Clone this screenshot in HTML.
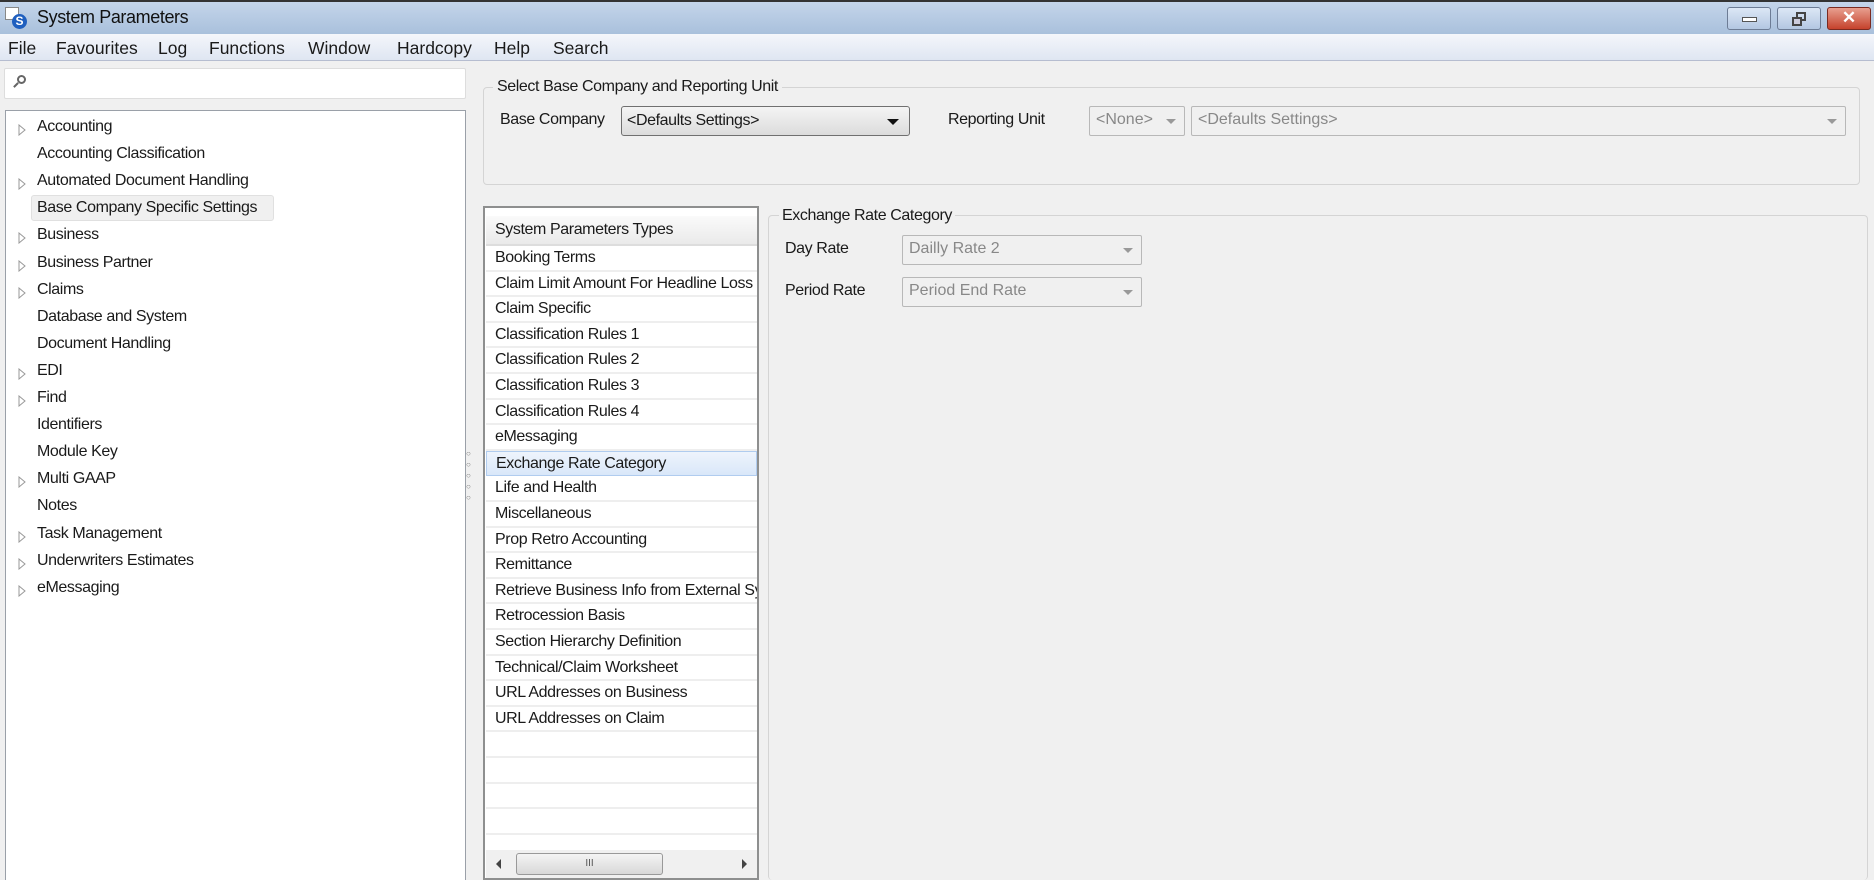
<!DOCTYPE html>
<html style="overflow:hidden;height:880px"><head><meta charset="utf-8"><style>
*{box-sizing:border-box;margin:0;padding:0}
body{width:1874px;height:880px;overflow:hidden;background:#f0f0f0;font-family:"Liberation Sans",sans-serif;font-size:16px;color:#1a1a1a;position:relative}
.a{position:absolute}
.t{letter-spacing:-0.4px;white-space:nowrap}
#title{left:0;top:0;width:1874px;height:34px;background:linear-gradient(#c4d5ea,#a9c0dc);border-top:2px solid #333}
#menu{left:0;top:34px;width:1874px;height:27px;background:linear-gradient(#f4f6fb,#dfe6f2);border-bottom:1px solid #b6bdd0;font-size:17.5px}
.mb{top:4px}
.wb{top:5px;height:23px;border:1px solid #6d7c95;border-radius:3px;background:linear-gradient(#dce7f5,#b3c7e2)}
.tree{left:5px;top:110px;width:461px;height:770px;background:#fff;border:1px solid #9aa0a8;border-bottom:none}
.grp{border:1px solid #d4d4d4;border-radius:4px}
.cb{border:1px solid #b8b8b8;border-radius:2px;background:#f0f0f0;color:#888;padding:4px 6px;font-size:16px}
.dd{position:absolute;right:8px;top:12px;border-left:5px solid transparent;border-right:5px solid transparent;border-top:5px solid #999}
.row{left:1px;width:271px;height:25.5px;border-bottom:2px solid #eeeeee;padding:3px 0 0 9px;overflow:hidden;white-space:nowrap;letter-spacing:-0.4px}
</style></head><body>
<div id="title" class="a">
 <div class="a" style="left:5px;top:5px;width:14px;height:13px;border:1px solid #888;background:#fff"></div>
 <div class="a" style="left:12px;top:12px;width:15px;height:15px;border-radius:50%;background:#1f5fbf;color:#fff;font-size:12px;font-weight:bold;text-align:center;line-height:15px">S</div>
 <div class="a t" style="left:37px;top:5px;font-size:18px;color:#111">System Parameters</div>
 <div class="a wb" style="left:1727px;width:44px"><div class="a" style="left:14px;top:9px;width:15px;height:5px;background:#fff;border:1px solid #555"></div></div>
 <div class="a wb" style="left:1777px;width:44px"><div class="a" style="left:18px;top:4px;width:10px;height:9px;border:2px solid #444"></div><div class="a" style="left:14px;top:9px;width:10px;height:9px;border:2px solid #444;background:#ccd"></div></div>
 <div class="a wb" style="left:1827px;width:44px;background:linear-gradient(#e8a090,#c5422c);border-color:#7a2a20;color:#fff;font-weight:bold;font-size:17px;text-align:center;line-height:20px">✕</div>
</div>
<div id="menu" class="a">
 <span class="a mb" style="left:8px">File</span>
 <span class="a mb" style="left:56px">Favourites</span>
 <span class="a mb" style="left:158px">Log</span>
 <span class="a mb" style="left:209px">Functions</span>
 <span class="a mb" style="left:308px">Window</span>
 <span class="a mb" style="left:397px">Hardcopy</span>
 <span class="a mb" style="left:494px">Help</span>
 <span class="a mb" style="left:553px">Search</span>
</div>
<div class="a" style="left:4px;top:68px;width:462px;height:31px;background:#fff;border:1px solid #ddd;border-radius:2px">
 <div class="a" style="left:12px;top:6px;width:9px;height:9px;border:2px solid #666;border-radius:50%"></div>
 <div class="a" style="left:8px;top:15px;width:6px;height:2px;background:#666;transform:rotate(-45deg)"></div>
</div>
<div class="a tree"></div>
<div class="a" style="left:31px;top:195px;width:243px;height:26px;background:#f0f0f0;border:1px solid #e0e0e0;border-radius:3px"></div>
<div id="items"></div>
<div class="a" style="left:466px;top:448px;width:8px;font-size:8px;line-height:11px;color:#777">○<br>○<br>○<br>○<br>○</div>

<div class="a grp" style="left:483px;top:87px;width:1377px;height:98px"></div>
<div class="a t" style="left:493px;top:78px;background:#f0f0f0;padding:0 4px">Select Base Company and Reporting Unit</div>
<div class="a t" style="left:500px;top:111px">Base Company</div>
<div class="a" style="left:621px;top:106px;width:289px;height:30px;border:1px solid #707070;border-radius:3px;background:linear-gradient(#f4f4f4,#dcdcdc);padding:5px 5px;letter-spacing:-0.4px">&lt;Defaults Settings&gt;<div class="a" style="right:10px;top:12px;border-left:6px solid transparent;border-right:6px solid transparent;border-top:6px solid #111"></div></div>
<div class="a t" style="left:948px;top:111px">Reporting Unit</div>
<div class="a cb" style="left:1089px;top:106px;width:96px;height:30px">&lt;None&gt;<div class="dd"></div></div>
<div class="a cb" style="left:1191px;top:106px;width:655px;height:30px">&lt;Defaults Settings&gt;<div class="dd"></div></div>

<div class="a" style="left:483px;top:206px;width:276px;height:674px;background:#fff;border:2px solid #8e8f8f">
 <div class="a" style="left:1px;top:8px;width:271px;height:30px;background:linear-gradient(#fafafa,#eaeaea);border-bottom:2px solid #ddd;padding:5px 0 0 9px;letter-spacing:-0.4px">System Parameters Types</div>
 <div id="rows"></div>
 <div class="a" style="left:1px;top:642px;width:271px;height:28px;background:#f0f0f0">
  <div class="a" style="left:10px;top:9px;border-right:5px solid #444;border-top:5px solid transparent;border-bottom:5px solid transparent"></div>
  <div class="a" style="left:30px;top:3px;width:147px;height:22px;border:1px solid #999;border-radius:3px;background:linear-gradient(#f4f4f4,#d8d8d8);text-align:center;font-size:10px;line-height:20px;color:#555">III</div>
  <div class="a" style="right:10px;top:9px;border-left:5px solid #444;border-top:5px solid transparent;border-bottom:5px solid transparent"></div>
 </div>
</div>

<div class="a grp" style="left:768px;top:215px;width:1100px;height:665px;border-bottom:none"></div>
<div class="a t" style="left:779px;top:207px;background:#f0f0f0;padding:0 3px">Exchange Rate Category</div>
<div class="a t" style="left:785px;top:240px">Day Rate</div>
<div class="a cb" style="left:902px;top:235px;width:240px;height:30px">Dailly Rate 2<div class="dd"></div></div>
<div class="a t" style="left:785px;top:282px">Period Rate</div>
<div class="a cb" style="left:902px;top:277px;width:240px;height:30px">Period End Rate<div class="dd"></div></div>

<script>
var tr=[["Accounting",1],["Accounting Classification",0],["Automated Document Handling",1],["Base Company Specific Settings",0],["Business",1],["Business Partner",1],["Claims",1],["Database and System",0],["Document Handling",0],["EDI",1],["Find",1],["Identifiers",0],["Module Key",0],["Multi GAAP",1],["Notes",0],["Task Management",1],["Underwriters Estimates",1],["eMessaging",1]];
var h="";
tr.forEach(function(e,i){var y=128+i*27.1;
h+='<div class="a t" style="left:37px;top:'+(y-10)+'px">'+e[0]+'</div>';
if(e[1])h+='<svg class="a" style="left:18px;top:'+(y-4)+'px" width="8" height="12"><path d="M1 1 L7 6 L1 11 Z" fill="#fff" stroke="#999"/></svg>';});
document.getElementById("items").innerHTML=h;
var rs=["Booking Terms","Claim Limit Amount For Headline Loss","Claim Specific","Classification Rules 1","Classification Rules 2","Classification Rules 3","Classification Rules 4","eMessaging","Exchange Rate Category","Life and Health","Miscellaneous","Prop Retro Accounting","Remittance","Retrieve Business Info from External System","Retrocession Basis","Section Hierarchy Definition","Technical/Claim Worksheet","URL Addresses on Business","URL Addresses on Claim","","","","",""];
var r="";rs.forEach(function(s,i){var y=38+i*25.6;var sel=i==8?'background:linear-gradient(#eef4fc,#d9e7f9);border:1px solid #b0ccef;':'';
if(y<640)r+='<div class="a row" style="top:'+y+'px;'+sel+'">'+s+'</div>';});
document.getElementById("rows").innerHTML=r;
</script>
</body></html>
